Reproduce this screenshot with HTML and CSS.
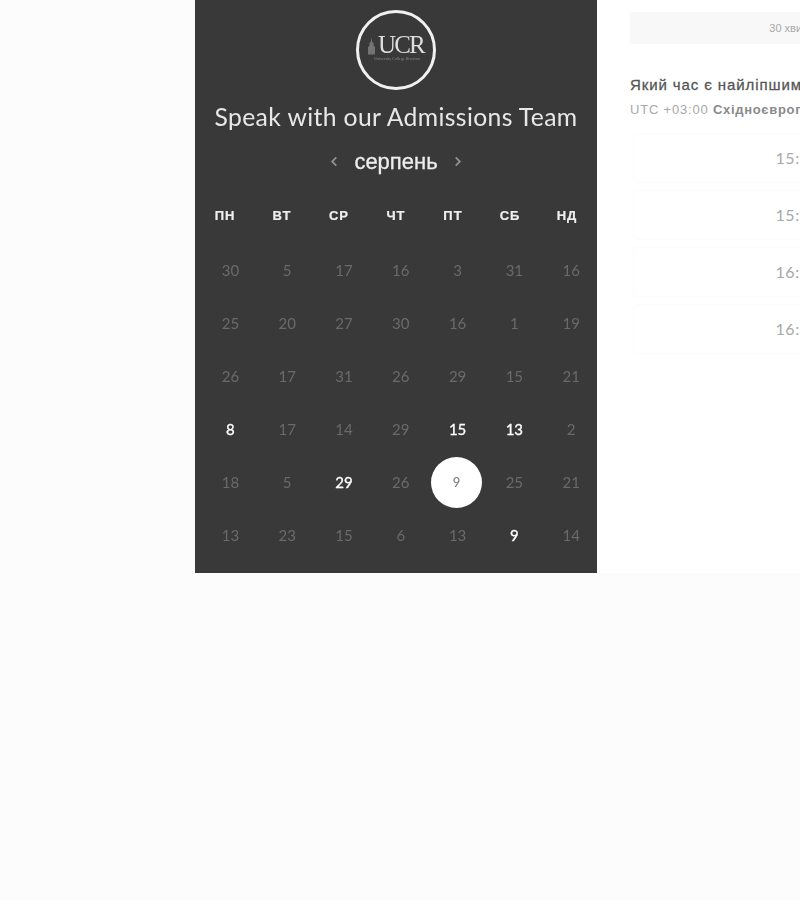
FILE: index.html
```html
<!DOCTYPE html>
<html lang="uk">
<head>
<meta charset="utf-8">
<title>Speak with our Admissions Team</title>
<link rel="stylesheet" href="styles.css">
</head>
<body>
<main class="card">
  <section class="calendar">
    <div class="logo">
      <svg class="tower" viewBox="0 0 10 24" aria-hidden="true"><path d="M5 0 6 6 8 8V12L10 13V24H0V13L2 12V8L4 6Z"/></svg>
      <span class="logo-mark">UCR</span>
      <span class="logo-sub">University College Riverton</span>
    </div>
    <h1 class="title">Speak with our Admissions Team</h1>
    <div class="month">
      <svg class="chev" viewBox="0 0 8 12" aria-hidden="true"><path d="M6.5 1.5 2 6l4.500 4.500"/></svg>
      <span class="month-name">серпень</span>
      <svg class="chev" viewBox="0 0 8 12" aria-hidden="true"><path d="M1.500 1.500 6 6l-4.500 4.500"/></svg>
    </div>
    <div class="weekdays">
      <span>ПН</span><span>ВТ</span><span>СР</span><span>ЧТ</span><span>ПТ</span><span>СБ</span><span>НД</span>
    </div>
    <div class="days">
      <span>30</span><span>5</span><span>17</span><span>16</span><span>3</span><span>31</span><span>16</span>
      <span>25</span><span>20</span><span>27</span><span>30</span><span>16</span><span>1</span><span>19</span>
      <span>26</span><span>17</span><span>31</span><span>26</span><span>29</span><span>15</span><span>21</span>
      <span class="on">8</span><span>17</span><span>14</span><span>29</span><span class="on">15</span><span class="on">13</span><span>2</span>
      <span>18</span><span>5</span><span class="on">29</span><span>26</span><span class="picked"><b>9</b></span><span>25</span><span>21</span>
      <span>13</span><span>23</span><span>15</span><span>6</span><span>13</span><span class="on">9</span><span>14</span>
    </div>
  </section>
  <section class="times">
    <div class="duration">30 хвилин</div>
    <h2 class="question">Який час є найліпшим для вас?</h2>
    <p class="zone">UTC +03:00 <strong>Східноєвропейський час</strong></p>
    <ul class="slots">
      <li>15:00</li>
      <li>15:30</li>
      <li>16:00</li>
      <li>16:30</li>
    </ul>
  </section>
</main>
</body>
</html>
```
FILE: styles.css
```css
* { box-sizing: border-box; }
html, body { margin: 0; height: 900px; overflow: hidden; }
body { background: #fcfcfc; font-family: "Liberation Sans", sans-serif; }

.card { display: flex; height: 573px; margin-left: 195px; width: 605px; background: #fff; overflow: hidden; }

.calendar { flex: 0 0 402px; background: #393939; color: #f2f2f2; display: flex; flex-direction: column; align-items: stretch; padding-top: 10px; overflow: hidden; filter: blur(0.4px); }

.logo { position: relative; align-self: center; width: 80px; height: 80px; border: 3px solid #f1f1f1; border-radius: 50%; display: flex; align-items: center; justify-content: center; }
.logo-mark { font: 400 25px/1 "Liberation Serif", serif; color: #dedede; letter-spacing: -1.8px; margin: -12px 0 0 10px; }
.tower { position: absolute; left: 9px; top: 24px; width: 7px; height: 18px; fill: #747474; }
.logo-sub { position: absolute; left: 11px; top: 44px; width: 54px; text-align: center; font: 400 4px/1 "Liberation Serif", serif; color: #8b8b8b; white-space: nowrap; }

.title { margin: 11px 0 0; height: 32px; text-align: center; font: 400 24.700px/32px Lato, sans-serif; letter-spacing: 0.38px; color: #e8e8e8; white-space: nowrap; }

.month { display: flex; align-items: center; justify-content: center; gap: 16px; margin-top: 15px; height: 28px; }
.month-name { font-size: 22px; line-height: 28px; color: #eee; -webkit-text-stroke: 0.3px #eee; }
.chev { width: 8px; height: 11px; fill: none; stroke: #8f8f8f; stroke-width: 2; margin-top: -2px; }

.weekdays { display: grid; grid-template-columns: repeat(7, 57px); padding-left: 1.500px; margin-top: 28px; height: 24px; }
.weekdays span { text-align: center; font-size: 13px; font-weight: 700; line-height: 24px; color: #efefef; letter-spacing: 1px; -webkit-text-stroke: 0.2px #efefef; }

.days { display: grid; grid-template-columns: repeat(7, 56.8px); grid-auto-rows: 53px; padding-left: 7px; margin-top: 16px; width: 410px; }
.days span { display: flex; align-items: center; justify-content: center; font: 400 15px/1 Lato, sans-serif; color: #6a6a6a; }
.days .on { color: #fff; -webkit-text-stroke: 0.3px #fff; }
.days .picked b { display: flex; align-items: center; justify-content: center; width: 51px; height: 51px; margin: -1px 0 0 -2px; border-radius: 50%; background: #fff; color: #777; font-weight: 400; font-size: 13px; flex: none; }

.times { flex: 1 1 auto; padding: 12px 0 0 33px; overflow: hidden; min-width: 0; }
.duration { width: 330px; height: 32px; background: #f8f8f8; text-align: center; font-size: 11px; line-height: 32px; color: #a8a8a8; white-space: nowrap; }
.question { margin: 31px 0 0; font-size: 15px; line-height: 20px; font-weight: 400; color: #555; white-space: nowrap; letter-spacing: 0.9px; -webkit-text-stroke: 0.3px #555; }
.zone { margin: 5px 0 0; font-size: 13px; line-height: 20px; color: #a8a8a8; white-space: nowrap; letter-spacing: 0.8px; }
.zone strong { color: #8a8a8a; font-weight: 700; letter-spacing: 0.7px; }

.slots { list-style: none; margin: 13px 0 0; padding: 0 0 0 3px; display: flex; flex-direction: column; gap: 7px; width: 332px; }
.slots li { height: 50px; border: 1px solid #fcfcfc; border-radius: 4px; text-align: center; font: 400 16px/48px Lato, sans-serif; color: #a8a8a8; letter-spacing: 0.6px; }
```
